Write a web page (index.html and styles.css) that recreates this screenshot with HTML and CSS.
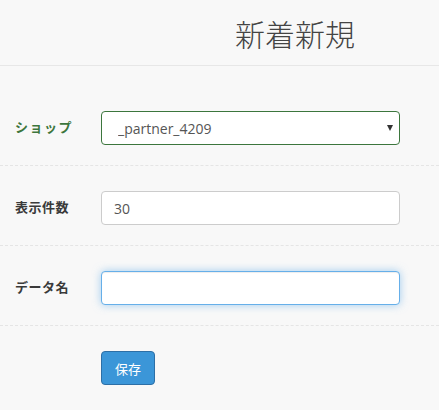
FILE: index.html
```html
<!DOCTYPE html>
<html lang="ja">
<head>
  <meta charset="UTF-8">
  <title>新着新規</title>
  <link rel="stylesheet" href="styles.css">
</head>
<body>
  <div class="page-header">
    <h1>新着新規</h1>
  </div>

  <form class="feed-form">
    <div class="form-row">
      <label class="row-label has-success">ショップ</label>
      <div class="select-wrap">
        <select class="field field-success">
          <option>_partner_4209</option>
        </select>
      </div>
    </div>

    <div class="form-row">
      <label class="row-label">表示件数</label>
      <input type="text" class="field" value="30">
    </div>

    <div class="form-row">
      <label class="row-label">データ名</label>
      <input type="text" class="field field-focus" value="">
    </div>

    <div class="form-row form-actions">
      <button type="button" class="btn-save">保存</button>
    </div>
  </form>
</body>
</html>
```

FILE: styles.css
```css
body {
  margin: 0;
  background-color: #f8f8f8;
  font-family: "Open Sans", "Noto Sans CJK JP", sans-serif;
  color: #333;
}

.page-header {
  height: 65px;
  border-bottom: 1px solid #e7e7e7;
  padding-left: 235px;
  display: flex;
  align-items: center;
}

.page-header h1 {
  margin: 0;
  font-family: "Noto Sans CJK JP", sans-serif;
  font-weight: 200;
  font-size: 30px;
  color: #444;
}

.feed-form {
  margin-top: 20px;
}

.form-row {
  display: flex;
  align-items: center;
  padding: 25px 0 20px;
  border-bottom: 1px dashed #e5e5e5;
}

.row-label {
  flex: 0 0 101px;
  box-sizing: border-box;
  padding: 0 0 3px 15px;
  font-family: "Noto Sans CJK JP", sans-serif;
  font-weight: bold;
  font-size: 13px;
  letter-spacing: 0.5px;
  color: #3a3a3a;
}

.row-label.has-success {
  color: #3c763d;
  letter-spacing: 1.5px;
}

.field {
  box-sizing: border-box;
  width: 299px;
  height: 34px;
  padding: 6px 12px;
  font-family: "Open Sans", sans-serif;
  font-size: 14px;
  color: #555;
  background-color: #fff;
  border: 1px solid #ccc;
  border-radius: 4px;
  outline: none;
}

.select-wrap {
  position: relative;
}

.select-wrap select {
  appearance: none;
  -webkit-appearance: none;
  padding-left: 16px;
}

.select-wrap::after {
  content: "";
  position: absolute;
  right: 7px;
  top: 14px;
  border-left: 3.5px solid transparent;
  border-right: 3.5px solid transparent;
  border-top: 6px solid #333;
}

.field-success {
  border-color: #3c763d;
}

.field-focus {
  border-color: #66afe9;
  box-shadow: inset 0 1px 1px rgba(0, 0, 0, .075), 0 0 8px rgba(102, 175, 233, .6);
}

.form-actions {
  padding-left: 101px;
  border-bottom: none;
}

.btn-save {
  width: 54px;
  height: 34px;
  padding: 0;
  font-family: "Noto Sans CJK JP", sans-serif;
  font-size: 13px;
  color: #fff;
  background-color: #3b96d8;
  border: 1px solid #2d6fa6;
  border-radius: 4px;
  cursor: pointer;
}
```
